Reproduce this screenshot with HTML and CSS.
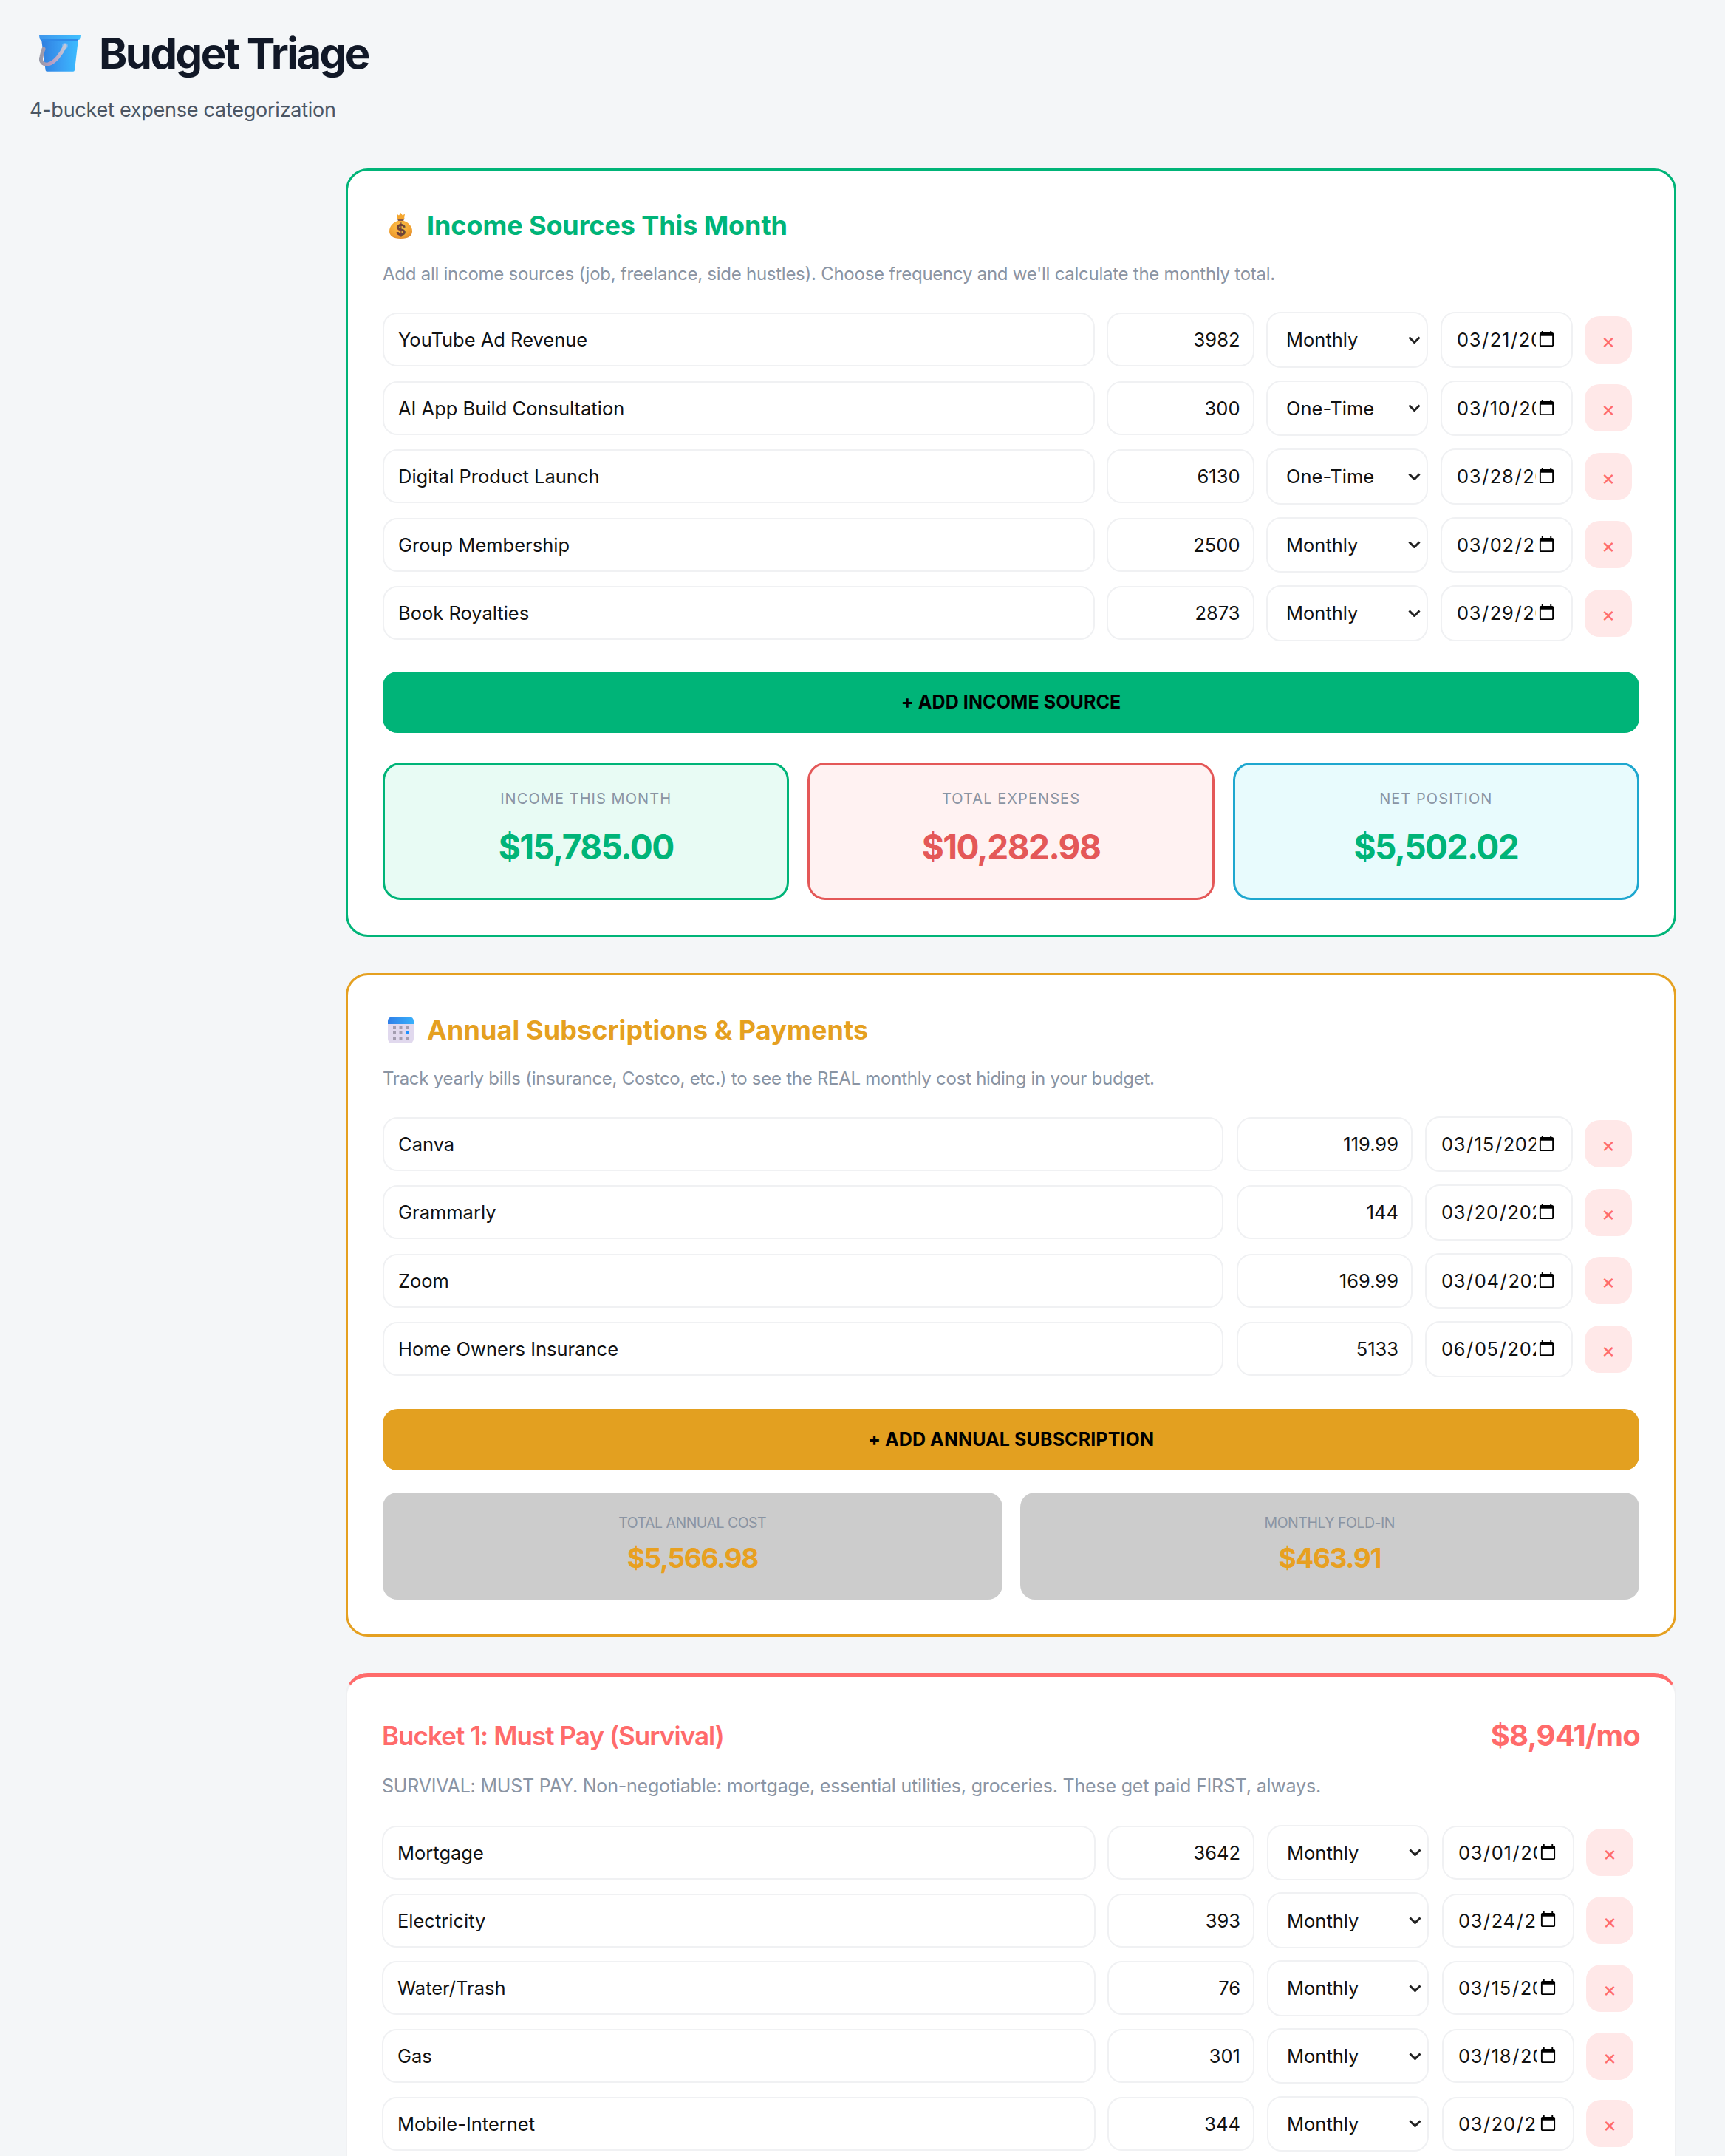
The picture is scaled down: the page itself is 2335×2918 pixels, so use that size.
FILE: index.html
```html
<!DOCTYPE html>
<html lang="en">
<head>
<meta charset="utf-8">
<title>Budget Triage</title>
<link rel="stylesheet" href="styles.css">
</head>
<body>
<header class="page-header">
  <div class="brand">
    <svg class="brand-icon" viewBox="0 0 56 50" aria-hidden="true">
      <defs>
        <linearGradient id="bucketBody" x1="0" y1="0" x2="1" y2="0"><stop offset="0" stop-color="#2f7fe0"/><stop offset="0.55" stop-color="#3aa0f4"/><stop offset="1" stop-color="#3bbcff"/></linearGradient>
        <linearGradient id="bucketRim" x1="0" y1="0" x2="1" y2="0"><stop offset="0" stop-color="#3f96ec"/><stop offset="1" stop-color="#3fc0ff"/></linearGradient>
        <linearGradient id="bucketHandle" x1="0" y1="0" x2="1" y2="0"><stop offset="0" stop-color="#9a9aa8"/><stop offset="0.45" stop-color="#b79cc4"/><stop offset="1" stop-color="#c2c8d8"/></linearGradient>
      </defs>
      <path d="M3 6h50l-5 42q-.2 1.700-1.800 1.700H10.400q-1.600 0-1.800-1.700z" fill="url(#bucketBody)"/>
      <path d="M1 0h54q1 0 1 1l-.6 4q-.2 2-2 2H2.600q-1.800 0-2-2L0 1q0-1 1-1z" fill="url(#bucketRim)"/>
      <rect x="3" y="6" width="50" height="2" fill="#2f8ae8"/>
      <circle cx="35" cy="15" r="4" fill="#6fb6f5"/>
      <path d="M35 15C30 26 21 38 12 40 5 41 1 36 3 30 4 25 5 22 6 19" fill="none" stroke="url(#bucketHandle)" stroke-width="5" stroke-linecap="round"/>
    </svg>
    <h1 class="brand-title">Budget Triage</h1>
  </div>
  <p class="brand-sub">4-bucket expense categorization</p>
</header>

<main class="sections">
  <section class="panel panel-income">
    <h2 class="panel-title">
      <svg class="title-icon" viewBox="0 0 31 35" aria-hidden="true">
        <defs><radialGradient id="bag" cx="0.45" cy="0.35" r="0.75"><stop offset="0" stop-color="#ffc24d"/><stop offset="0.7" stop-color="#f0a030"/><stop offset="1" stop-color="#d77f2c"/></radialGradient></defs>
        <path d="M15.500 10C7 11 0 17 0 25c0 6 5 10 15.500 10S31 31 31 25c0-8-7-14-15.500-15z" fill="url(#bag)"/>
        <path d="M10.500 7.500h10l-1.500 3.500h-7z" fill="#8a5a44"/>
        <path d="M10 1.500l3 2 2.500-3.500 2.500 3.500 3-2-1 6.500h-9z" fill="#f5a62e"/>
        <text class="bag-dollar" x="15.500" y="31" text-anchor="middle">$</text>
      </svg>
      Income Sources This Month
    </h2>
    <p class="panel-desc">Add all income sources (job, freelance, side hustles). Choose frequency and we'll calculate the monthly total.</p>
    <div class="rows">
      <div class="row row-freq"><input class="field field-name" value="YouTube Ad Revenue"><input class="field field-amount" type="number" value="3982"><select class="field field-select"><option selected>Monthly</option><option>One-Time</option></select><input class="field field-date" type="date" value="2026-03-21"><button class="remove">×</button></div>
      <div class="row row-freq"><input class="field field-name" value="AI App Build Consultation"><input class="field field-amount" type="number" value="300"><select class="field field-select"><option>Monthly</option><option selected>One-Time</option></select><input class="field field-date" type="date" value="2026-03-10"><button class="remove">×</button></div>
      <div class="row row-freq"><input class="field field-name" value="Digital Product Launch"><input class="field field-amount" type="number" value="6130"><select class="field field-select"><option>Monthly</option><option selected>One-Time</option></select><input class="field field-date" type="date" value="2026-03-28"><button class="remove">×</button></div>
      <div class="row row-freq"><input class="field field-name" value="Group Membership"><input class="field field-amount" type="number" value="2500"><select class="field field-select"><option selected>Monthly</option><option>One-Time</option></select><input class="field field-date" type="date" value="2026-03-02"><button class="remove">×</button></div>
      <div class="row row-freq"><input class="field field-name" value="Book Royalties"><input class="field field-amount" type="number" value="2873"><select class="field field-select"><option selected>Monthly</option><option>One-Time</option></select><input class="field field-date" type="date" value="2026-03-29"><button class="remove">×</button></div>
    </div>
    <button class="add add-income">+ ADD INCOME SOURCE</button>
    <div class="stats stats-three">
      <div class="stat stat-green"><div class="stat-label">INCOME THIS MONTH</div><div class="stat-value">$15,785.00</div></div>
      <div class="stat stat-red"><div class="stat-label">TOTAL EXPENSES</div><div class="stat-value">$10,282.98</div></div>
      <div class="stat stat-cyan"><div class="stat-label">NET POSITION</div><div class="stat-value">$5,502.02</div></div>
    </div>
  </section>

  <section class="panel panel-annual">
    <h2 class="panel-title">
      <svg class="title-icon title-icon-cal" viewBox="0 0 35 36" aria-hidden="true">
        <defs><linearGradient id="calTop" x1="0" y1="0" x2="1" y2="0"><stop offset="0" stop-color="#2f7fe8"/><stop offset="1" stop-color="#38b0fb"/></linearGradient></defs>
        <rect x="0" y="0" width="35" height="36" rx="6" fill="#e1d9ee"/>
        <path d="M0 10V6a6 6 0 0 1 6-6h23a6 6 0 0 1 6 6v4z" fill="url(#calTop)"/>
        <g fill="#a39db0">
          <rect x="7" y="13" width="4" height="4"/><rect x="15.500" y="13" width="4" height="4"/><rect x="24" y="13" width="4" height="4"/>
          <rect x="7" y="20" width="4" height="4"/><rect x="15.500" y="20" width="4" height="4"/>
          <rect x="7" y="27" width="4" height="4"/><rect x="15.500" y="27" width="4" height="4"/><rect x="24" y="27" width="4" height="4"/>
        </g>
        <rect x="24" y="20" width="4" height="4" fill="#1e90ff"/>
      </svg>
      Annual Subscriptions &amp; Payments
    </h2>
    <p class="panel-desc">Track yearly bills (insurance, Costco, etc.) to see the REAL monthly cost hiding in your budget.</p>
    <div class="rows">
      <div class="row row-annual"><input class="field field-name" value="Canva"><input class="field field-amount" type="number" value="119.99"><input class="field field-date" type="date" value="2026-03-15"><button class="remove">×</button></div>
      <div class="row row-annual"><input class="field field-name" value="Grammarly"><input class="field field-amount" type="number" value="144"><input class="field field-date" type="date" value="2026-03-20"><button class="remove">×</button></div>
      <div class="row row-annual"><input class="field field-name" value="Zoom"><input class="field field-amount" type="number" value="169.99"><input class="field field-date" type="date" value="2026-03-04"><button class="remove">×</button></div>
      <div class="row row-annual"><input class="field field-name" value="Home Owners Insurance"><input class="field field-amount" type="number" value="5133"><input class="field field-date" type="date" value="2026-06-05"><button class="remove">×</button></div>
    </div>
    <button class="add add-annual">+ ADD ANNUAL SUBSCRIPTION</button>
    <div class="stats stats-two">
      <div class="stat stat-gray"><div class="stat-label">TOTAL ANNUAL COST</div><div class="stat-value">$5,566.98</div></div>
      <div class="stat stat-gray"><div class="stat-label">MONTHLY FOLD-IN</div><div class="stat-value">$463.91</div></div>
    </div>
  </section>

  <section class="panel panel-bucket">
    <div class="bucket-head">
      <h2 class="bucket-title">Bucket 1: Must Pay (Survival)</h2>
      <div class="bucket-total">$8,941/mo</div>
    </div>
    <p class="panel-desc">SURVIVAL: MUST PAY. Non-negotiable: mortgage, essential utilities, groceries. These get paid FIRST, always.</p>
    <div class="rows">
      <div class="row row-freq"><input class="field field-name" value="Mortgage"><input class="field field-amount" type="number" value="3642"><select class="field field-select"><option selected>Monthly</option><option>One-Time</option></select><input class="field field-date" type="date" value="2026-03-01"><button class="remove">×</button></div>
      <div class="row row-freq"><input class="field field-name" value="Electricity"><input class="field field-amount" type="number" value="393"><select class="field field-select"><option selected>Monthly</option><option>One-Time</option></select><input class="field field-date" type="date" value="2026-03-24"><button class="remove">×</button></div>
      <div class="row row-freq"><input class="field field-name" value="Water/Trash"><input class="field field-amount" type="number" value="76"><select class="field field-select"><option selected>Monthly</option><option>One-Time</option></select><input class="field field-date" type="date" value="2026-03-15"><button class="remove">×</button></div>
      <div class="row row-freq"><input class="field field-name" value="Gas"><input class="field field-amount" type="number" value="301"><select class="field field-select"><option selected>Monthly</option><option>One-Time</option></select><input class="field field-date" type="date" value="2026-03-18"><button class="remove">×</button></div>
      <div class="row row-freq"><input class="field field-name" value="Mobile-Internet"><input class="field field-amount" type="number" value="344"><select class="field field-select"><option selected>Monthly</option><option>One-Time</option></select><input class="field field-date" type="date" value="2026-03-20"><button class="remove">×</button></div>
    </div>
  </section>
</main>
</body>
</html>
```

FILE: styles.css
```css
* { box-sizing: border-box; }

html, body {
  height: 100%;
  overflow: hidden;
}

body {
  margin: 0;
  background: #f4f6f8;
  color: #111827;
  font-family: Inter, "Liberation Sans", sans-serif;
}

.page-header {
  padding: 46px 0 0 40px;
  height: 228px;
}

.brand {
  display: flex;
  align-items: center;
  gap: 25px;
  padding-left: 13px;
}

.brand-icon {
  width: 56px;
  height: 50px;
  flex: none;
}

.brand-title {
  margin: 0;
  font-size: 58px;
  line-height: 52px;
  font-weight: 700;
  letter-spacing: -2.5px;
  color: #111827;
}

.brand-sub {
  margin: 33px 0 0;
  font-size: 27px;
  line-height: 36px;
  color: #4b5563;
  letter-spacing: -0.25px;
}

.sections {
  margin: 0 66px 0 468px;
  display: flex;
  flex-direction: column;
  gap: 49px;
}

.panel {
  background: #fff;
  border-radius: 30px;
  padding: 49px 47px 47px;
  border: 3px solid transparent;
}

.panel-income { border-color: #00b478; }
.panel-annual { border-color: #e5a020; }

.panel-bucket {
  border: 2px solid #f0f1f3;
  border-top: 6px solid #ff6b6b;
  padding: 44px 47px 100px;
}

.panel-title {
  margin: 0;
  display: flex;
  align-items: center;
  gap: 20px;
  height: 50px;
  font-size: 36px;
  font-weight: 700;
  letter-spacing: -0.1px;
}

.panel-income .panel-title { color: #00b478; }
.panel-annual .panel-title { color: #e5a020; letter-spacing: 0.1px; }

.title-icon {
  width: 31px;
  height: 35px;
  margin-left: 9px;
  flex: none;
}

.title-icon-cal {
  width: 35px;
  height: 36px;
  margin-left: 7px;
  margin-right: -2px;
}

.bag-dollar {
  font-size: 21px;
  font-weight: 700;
  fill: #6f4238;
}

.panel-desc {
  margin: 24px 0 34px;
  font-size: 24px;
  line-height: 34px;
  color: #8a94a3;
  letter-spacing: -0.26px;
}

.panel-bucket .panel-desc {
  margin: 16px 0 36px;
  font-size: 25px;
  letter-spacing: -0.2px;
}

.rows {
  display: flex;
  flex-direction: column;
  gap: 17px;
}

.row {
  display: flex;
  align-items: center;
  height: 75.500px;
  padding-right: 10px;
}

.field {
  border: 2px solid #f0f1f3;
  border-radius: 20px;
  background: #fff;
  font-family: inherit;
  font-size: 25.500px;
  color: #111;
  padding: 0 19px;
  height: 73px;
  outline: none;
}

.field-amount::-webkit-inner-spin-button,
.field-amount::-webkit-outer-spin-button {
  -webkit-appearance: none;
  margin: 0;
}

.field-name { flex: 1; min-width: 0; }
.field-amount { text-align: right; flex: none; padding-right: 17px; }

.field-select {
  flex: none;
  height: 75.500px;
  padding-left: 25px;
  appearance: none;
  -webkit-appearance: none;
  background: #fff url("data:image/svg+xml,%3Csvg xmlns='http://www.w3.org/2000/svg' width='17' height='10' viewBox='0 0 17 10'%3E%3Cpath d='M1.500 1.500l7 7 7-7' fill='none' stroke='%23222' stroke-width='3'/%3E%3C/svg%3E") no-repeat right 8px center;
}

.field-date { flex: none; height: 75.500px; letter-spacing: 0.6px; }

.row-freq .field-amount { width: 199.500px; margin-left: 16px; }
.row-freq .field-select { width: 219px; margin-left: 16.500px; }
.row-freq .field-date { width: 179px; margin-left: 17px; }

.row-annual .field-amount { width: 238px; margin-left: 18.500px; }
.row-annual .field-date { width: 200px; margin-left: 17px; }

.panel-bucket .row { padding-right: 9px; }
.panel-bucket .row-freq .field-select { margin-left: 17px; }
.panel-bucket .row-freq .field-date { margin-left: 18px; height: 73px; }

.remove {
  flex: none;
  width: 64px;
  height: 64px;
  margin-left: 16px;
  padding: 2px 0 0;
  border: 0;
  border-radius: 20px;
  background: #ffe8e8;
  color: #ff6b6b;
  font-family: inherit;
  font-size: 28px;
  line-height: 1;
}

.add {
  display: block;
  width: 100%;
  height: 83px;
  margin-top: 41px;
  border: 0;
  border-radius: 20px;
  color: #000;
  font-family: inherit;
  font-size: 25px;
  font-weight: 700;
  letter-spacing: 0.1px;
}

.add-income { background: #00b478; }
.add-annual { background: #e3a020; margin-top: 43px; }

.stats {
  display: grid;
  margin-top: 40px;
}

.stats-three { grid-template-columns: repeat(3, 1fr); gap: 25px; }
.stats-two { grid-template-columns: repeat(2, 1fr); gap: 24px; margin-top: 30px; }

.stat {
  text-align: center;
  border-radius: 24px;
  border: 3px solid transparent;
  height: 186px;
  padding-top: 32px;
}

.stat-label {
  font-size: 20px;
  line-height: 28px;
  letter-spacing: 1.070px;
  color: #8a94a3;
}

.stat-value {
  margin-top: 22px;
  font-size: 46px;
  line-height: 58px;
  font-weight: 700;
  letter-spacing: -1.600px;
}

.stat-green { background: #e8fbf4; border-color: #00b478; }
.stat-green .stat-value { color: #00b478; }
.stat-red { background: #fff2f2; border-color: #e45858; }
.stat-red .stat-value { color: #e45858; }
.stat-cyan { background: #e8fbfd; border-color: #1ea7cf; }
.stat-cyan .stat-value { color: #00b478; }

.stat-gray {
  background: #cccccc;
  border: 0;
  height: 145px;
  border-radius: 20px;
  padding-top: 27px;
}

.stat-gray .stat-label {
  font-size: 19.500px;
  letter-spacing: -0.5px;
}

.stat-gray .stat-value {
  margin-top: 9px;
  font-size: 37px;
  line-height: 50px;
  letter-spacing: -1.400px;
  color: #e8a020;
}

.bucket-head {
  display: flex;
  justify-content: space-between;
  align-items: center;
  height: 70px;
}

.bucket-title {
  margin: 0;
  font-size: 35px;
  font-weight: 600;
  color: #ff6b6b;
  letter-spacing: -0.950px;
}

.bucket-total {
  font-size: 40px;
  font-weight: 700;
  color: #ff6b6b;
  letter-spacing: -0.8px;
}

.panel-bucket .rows { gap: 16.300px; }
```
